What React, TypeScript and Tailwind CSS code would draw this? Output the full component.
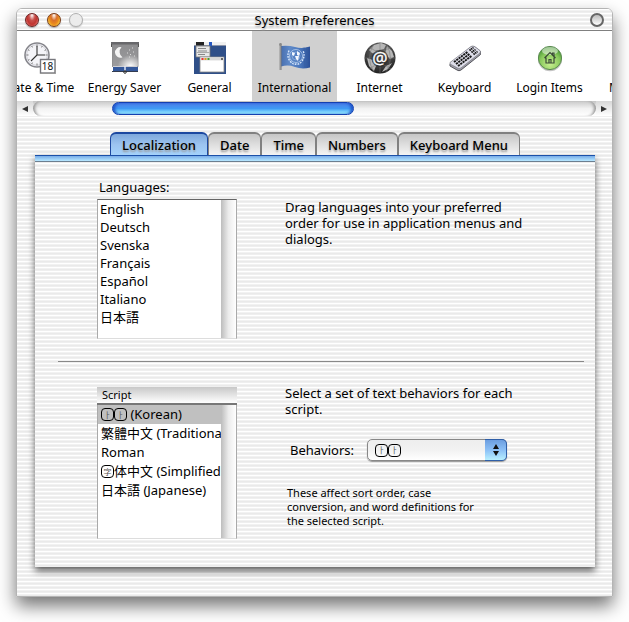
import type { ReactNode } from "react";

const stripes =
  "bg-[repeating-linear-gradient(to_bottom,#ffffff_0px,#ffffff_1px,#f2f2f2_1px,#f2f2f2_2px,#eaeaea_2px,#eaeaea_3px,#efefef_3px,#efefef_4px)]";

function ClockIcon() {
  return (
    <svg width="32" height="32" viewBox="0 0 32 32" aria-hidden="true">
      <circle cx="13" cy="13" r="12" fill="#f4f4f8" stroke="#85858b" strokeWidth="1.6" />
      <circle cx="13" cy="13" r="10.4" fill="none" stroke="#d2d2d8" strokeWidth="1" />
      <path d="M13 2.5v2M13 21.500v2M2.500 13h2M21.500 13h2M7.700 4l.8 1.400M18.300 4l-.8 1.400M4 7.700l1.400.8M22 7.700l-1.400.8M4 18.300l1.400-.8M7.700 22l.8-1.400" stroke="#777" strokeWidth="1" />
      <path d="M13 4v9h8M13 13l-6 6" fill="none" stroke="#333" strokeWidth="1.1" />
      <rect x="16.500" y="17.500" width="14.500" height="13.500" fill="#fff" stroke="#77777d" strokeWidth="1.400" />
      <path d="M16 31.500h15.500V18" fill="none" stroke="#999" strokeWidth="1" />
      <text x="23.500" y="28" fontSize="10" textAnchor="middle" fill="#111" fontFamily="Noto Sans, sans-serif">18</text>
    </svg>
  );
}

function EnergyIcon() {
  return (
    <svg width="32" height="32" viewBox="0 0 32 32" aria-hidden="true">
      <defs>
        <linearGradient id="shade" x1="0" y1="0" x2="0" y2="1">
          <stop offset="0" stopColor="#8c8c8e" />
          <stop offset="1" stopColor="#9c9c9e" />
        </linearGradient>
        <radialGradient id="glow" cx=".7" cy="1" r=".5">
          <stop offset="0" stopColor="#fff" />
          <stop offset="1" stopColor="#fff" stopOpacity="0" />
        </radialGradient>
      </defs>
      <rect x="4" y="22" width="25" height="8" fill="#34589a" />
      <path d="M3 29.500h26" stroke="#333c50" strokeWidth="1.200" />
      <rect x="3.500" y="1" width="25.500" height="23.500" fill="url(#shade)" stroke="#808082" strokeWidth=".8" />
      <rect x="3.500" y="1" width="25.500" height="23.500" fill="url(#glow)" />
      <rect x="2" y="0" width="28" height="2.500" fill="#68686b" />
      <path d="M2.500 2v3M29.500 2v3" stroke="#555" />
      <path d="M12.500 5.200a5.300 5.300 0 1 0 1 10A6.500 6.500 0 0 1 12.500 5.200z" fill="#f4f4f4" />
      <path d="M20 8h1M24 10h1M21 12.500h1M18 11h1M25 14h1M20 15h1M23 6h1" stroke="#ddd" />
      <path d="M4 24.500h24" stroke="#cfcfd4" strokeWidth="1" />
      <path d="M16 24v5" stroke="#dfe6f4" strokeWidth="1.500" />
      <circle cx="16" cy="30" r="1.300" fill="none" stroke="#333" />
    </svg>
  );
}

function GeneralIcon() {
  return (
    <svg width="32" height="32" viewBox="0 0 32 32" aria-hidden="true">
      <rect width="32" height="32" fill="#2f4f88" />
      <rect width="32" height="4" fill="#f0f0f0" />
      <path d="M0 3.500h32" stroke="#8d95a8" />
      <rect x="2" y="0" width="8" height="3.500" fill="#222" />
      <rect x="15" y="0" width="3" height="4" fill="#2456c0" />
      <rect x="2" y="4" width="14" height="11" fill="#e8e8e8" stroke="#777" strokeWidth=".8" />
      <path d="M4 6.500h8M4 9h9M4 12.500h7" stroke="#888" />
      <path d="M2.500 10.500h13" stroke="#aaa" />
      <rect x="6" y="15" width="24" height="15" fill="#fff" stroke="#888" strokeWidth=".8" />
      <rect x="6.400" y="15.400" width="23.200" height="3" fill="#d8d8d8" />
      <path d="M7.500 17h2" stroke="#e33" strokeWidth="2" />
      <path d="M10.500 17h2" stroke="#dc9b20" strokeWidth="2" />
      <path d="M13.500 17h2" stroke="#4a9a30" strokeWidth="2" />
      <rect x="27" y="16" width="2" height="2" fill="#666" />
    </svg>
  );
}

function FlagIcon() {
  return (
    <svg width="32" height="32" viewBox="0 0 32 32" aria-hidden="true">
      <defs>
        <linearGradient id="cloth" x1="0" y1="0" x2="1" y2="0">
          <stop offset="0" stopColor="#496fae" />
          <stop offset=".3" stopColor="#5f8ac9" />
          <stop offset=".65" stopColor="#4b78bd" />
          <stop offset="1" stopColor="#2b5099" />
        </linearGradient>
      </defs>
      <path d="M2 4q7-1 14 1t15-.5v21q-8 2-15-.5T2 24.500z" fill="url(#cloth)" />
      <path d="M25 5.500l1 20M28 5.500l.5 19" stroke="#355d9e" strokeOpacity=".6" />
      <path d="M1.500 3v25" stroke="#777" strokeWidth="2" />
      <path d="M1 3v25" stroke="#ccc" strokeWidth=".7" />
      <circle cx="1.500" cy="2.500" r="1.400" fill="#888" />
      <circle cx="17" cy="14" r="6.500" fill="none" stroke="#c6dbf5" strokeWidth=".7" />
      <circle cx="17" cy="14" r="4" fill="none" stroke="#c6dbf5" strokeWidth=".4" />
      <path d="M13 10l3 1-1 3-2-1zM18 9l3 2-1 3-2-1zM16 14l4 0-1 5-2-2z" fill="#f4f8ff" />
      <path d="M10 8.500q-2.500 6 1 10.500 3 4 6 3Q20 23 23 19q3.500-4.500 1-10.500" fill="none" stroke="#d7e6fb" strokeWidth="1.400" strokeDasharray="1.800 1" />
    </svg>
  );
}

function GlobeIcon() {
  return (
    <svg width="32" height="32" viewBox="0 0 32 32" aria-hidden="true">
      <defs>
        <radialGradient id="orb" cx=".5" cy=".3" r=".7">
          <stop offset="0" stopColor="#777" />
          <stop offset="1" stopColor="#202020" />
        </radialGradient>
      </defs>
      <circle cx="16" cy="16" r="15.500" fill="url(#orb)" />
      <path d="M5 8l5-5 7-2 5 2-2 4-5 1-2 4-5-1zM23 4l5 5 2 6-4 2-5-5zM3 16l6 2 3 6-2 5-5-5zM22 24l6-3-4 6-6 3z" fill="#b6b6b6" />
      <path d="M0.500 16h31M16 .5v31M5 5q11 9 22 0M5 27q11-9 22 0M10 2q-9 14 0 28M22 2q9 14 0 28" fill="none" stroke="#777" strokeWidth=".5" />
      <circle cx="16" cy="16.500" r="8.500" fill="#292929" fillOpacity=".7" />
      <text x="16" y="21.500" textAnchor="middle" fontSize="17" fill="#fff" stroke="#fff" strokeWidth=".3" fontFamily="Noto Sans, sans-serif">@</text>
    </svg>
  );
}

function KeyboardIcon() {
  return (
    <svg width="32" height="32" viewBox="0 0 32 32" aria-hidden="true">
      <path d="M1 22L22 5q2-1 4 0l5.500 4.500q1 1.500 0 3L12 28q-2 1.500-4 0L1 24z" fill="#a2a2ac" stroke="#55555c" strokeWidth="1" />
      <path d="M1 20.500L22 4.500q2-1 3.500 0l5.500 4q1 1 0 2.500L12 26q-2 1-3.500 0L1 22z" fill="#dedeea" stroke="#77777f" strokeWidth=".7" />
      <path d="M5 20l13.500-10M7 22l13.500-10M9 24l13.500-10" stroke="#161616" strokeWidth="1.900" strokeDasharray="2.200 .7" />
      <path d="M20.500 8.500l4-3M22.500 10.500l4-3M24.500 12.500l4-3" stroke="#161616" strokeWidth="1.900" strokeDasharray="1.500 .5" />
    </svg>
  );
}

function LoginIcon() {
  return (
    <svg width="32" height="32" viewBox="0 0 32 32" aria-hidden="true">
      <defs>
        <radialGradient id="lime" cx=".5" cy=".75" r=".75">
          <stop offset="0" stopColor="#c8f090" />
          <stop offset=".6" stopColor="#88c85c" />
          <stop offset="1" stopColor="#3b8d2b" />
        </radialGradient>
      </defs>
      <ellipse cx="16" cy="17.200" rx="12" ry="12" fill="#c4c4c4" />
      <circle cx="16" cy="16" r="11.600" fill="url(#lime)" stroke="#5b8a52" strokeWidth="1" />
      <ellipse cx="16" cy="9" rx="8" ry="4" fill="#fff" fillOpacity=".5" />
      <path d="M10.500 16L16 10.500l5.500 5.500M12 15.500v5.500h8v-5.500M18.500 12.500V11H20v3M15 21v-3.500h2V21" fill="none" stroke="#3a4a36" strokeWidth="1.200" />
    </svg>
  );
}

const panes: { label: string; icon: ReactNode }[] = [
  { label: "Date & Time", icon: <ClockIcon /> },
  { label: "Energy Saver", icon: <EnergyIcon /> },
  { label: "General", icon: <GeneralIcon /> },
  { label: "International", icon: <FlagIcon /> },
  { label: "Internet", icon: <GlobeIcon /> },
  { label: "Keyboard", icon: <KeyboardIcon /> },
  { label: "Login Items", icon: <LoginIcon /> },
  { label: "Monitors", icon: null },
];

const tabs = ["Localization", "Date", "Time", "Numbers", "Keyboard Menu"];
const languages = ["English", "Deutsch", "Svenska", "Français", "Español", "Italiano", "日本語"];

/* Rounded frame used where the font has no glyph for a character. */
function BoxedGlyph({ char }: { char: string }) {
  return (
    <span className="inline-flex h-[13px] w-[13px] shrink-0 items-center justify-center overflow-hidden rounded-[4px] border border-black text-[8px] leading-none text-[#555]">
      {char}
    </span>
  );
}

function KoreanGlyphs() {
  return (
    <span className="inline-flex">
      <BoxedGlyph char="ㅏ" />
      <BoxedGlyph char="ㅏ" />
    </span>
  );
}

const scripts: { key: string; label: ReactNode }[] = [
  { key: "korean", label: <><KoreanGlyphs /><span>&nbsp;(Korean)</span></> },
  { key: "traditional", label: "繁體中文 (Traditional Chinese)" },
  { key: "roman", label: "Roman" },
  { key: "simplified", label: <><BoxedGlyph char="字" /><span>体中文 (Simplified Chinese)</span></> },
  { key: "japanese", label: "日本語 (Japanese)" },
];

function ListTrack() {
  return <div className="w-[15px] shrink-0 bg-linear-to-r from-[#bdbdbd] via-[#ececec] to-white" />;
}

function TitleBar() {
  return (
    <header className={`grid h-[22px] grid-cols-[1fr_auto_1fr] items-center border-b border-[#808080] px-2 ${stripes}`}>
      <div className="flex gap-2">
        <button aria-label="Close" className="h-[14px] w-[14px] rounded-full border border-[#6a2020] bg-[radial-gradient(ellipse_at_50%_10%,#ffffff_0%,#c8504c_35%,#c03430_60%,#ffa098_100%)] shadow-[0_1px_1px_#aaaaaa]" />
        <button aria-label="Minimize" className="h-[14px] w-[14px] rounded-full border border-[#7a3a16] bg-[radial-gradient(ellipse_at_50%_10%,#ffffff_0%,#d8702c_35%,#ec8c1c_60%,#fff85c_95%)] shadow-[0_1px_1px_#aaaaaa]" />
        <button aria-label="Zoom" disabled className="h-[14px] w-[14px] rounded-full border border-[#b0b0b0] bg-[#ececec] shadow-[0_1px_1px_#cccccc]" />
      </div>
      <h1 className="text-[13px] leading-5 [text-shadow:0_2px_2px_#aaaaaa]">System Preferences</h1>
      <button aria-label="Toggle toolbar" className="h-[14px] w-[14px] justify-self-end rounded-full border-2 border-[#666] bg-linear-to-b from-[#bbbbbb] to-white" />
    </header>
  );
}

function Toolbar() {
  return (
    <nav aria-label="Preference panes" className="overflow-hidden bg-white">
      <div className="-ml-5 flex">
        {panes.map((pane) => (
          <button
            key={pane.label}
            className={`flex h-[70px] w-[85px] shrink-0 flex-col items-center pt-[11px] text-[12px] leading-4 whitespace-nowrap ${
              pane.label === "International" ? "bg-[#d0d0d0]" : ""
            }`}
          >
            <span className="h-[38px]">{pane.icon}</span>
            {pane.label}
          </button>
        ))}
      </div>
    </nav>
  );
}

function PaneScroller() {
  return (
    <div className="flex h-[15px] items-center bg-linear-to-b from-[#c4c4c4] via-[#f4f4f4] to-white">
      <button aria-label="Scroll left" className="flex h-full w-4 items-center justify-center bg-linear-to-b from-[#d8d8d8] to-white">
        <svg width="6" height="6" viewBox="0 0 6 6"><path d="M6 0v6L0 3z" fill="#333" /></svg>
      </button>
      <div className="flex h-full grow rounded-full bg-linear-to-b from-[#c8c8c8] via-[#f2f2f2] to-white shadow-[inset_4px_0_3px_-2px_#999999,inset_-4px_0_3px_-2px_#999999]">
        <div className="w-[14%]" />
        <div className="my-px w-[43%] rounded-full border border-[#1440b0] bg-linear-to-b from-[#4a7ce8] via-[#3f9af4] to-[#a0f4ff] shadow-[inset_3px_0_3px_-1px_#1d50c8,inset_-3px_0_3px_-1px_#1d50c8]" />
      </div>
      <button aria-label="Scroll right" className="flex h-full w-4 items-center justify-center bg-linear-to-b from-[#d8d8d8] to-white">
        <svg width="6" height="6" viewBox="0 0 6 6"><path d="M0 0v6l6-3z" fill="#333" /></svg>
      </button>
    </div>
  );
}

function TabBar() {
  return (
    <div role="tablist" className="flex justify-center">
      {tabs.map((tab, i) => (
        <button
          key={tab}
          role="tab"
          aria-selected={i === 0}
          className={`h-[23px] rounded-t-[6px] border-x border-t-2 px-[11px] text-[13px] leading-5 font-medium [text-shadow:0_2px_2px_#999999] ${
            i === 0
              ? "border-[#1c48a0] bg-linear-to-b from-[#7ea8dc] via-[#9cc4f0] to-[#a4d2fb]"
              : "border-[#808080] bg-linear-to-b from-[#c6c6c6] via-[#dedede] to-[#f4f4f4]"
          }`}
        >
          {tab}
        </button>
      ))}
    </div>
  );
}

function Languages() {
  return (
    <section className="grid grid-cols-[140px_1fr] gap-x-12 pr-[60px] pl-[62px]">
      <div>
        <h2 id="languages" className="pl-[2px] text-[13px] leading-6">Languages:</h2>
        <div className="flex h-[140px] border border-t-[#666] border-r-[#aaa] border-b-[#ddd] border-l-[#aaa] bg-white">
          <ul role="listbox" aria-labelledby="languages" className="min-w-0 grow">
            {languages.map((name) => (
              <li key={name} role="option" aria-selected={false} className="h-[18px] pl-[2px] text-[13px] leading-[18px]">
                {name}
              </li>
            ))}
          </ul>
          <ListTrack />
        </div>
      </div>
      <p className="max-w-[252px] pt-6 text-[13px] leading-4">
        Drag languages into your preferred order for use in application menus and dialogs.
      </p>
    </section>
  );
}

function Scripts() {
  return (
    <section className="grid grid-cols-[140px_1fr] gap-x-12 pr-[60px] pl-[62px]">
      <div className="flex h-[154px] flex-col pt-[2px]">
        <table className="w-full table-fixed">
          <thead>
            <tr>
              <th className="h-[17px] border-b-2 border-[#777] bg-linear-to-b from-[#c8c8c8] via-[#e4e4e4] to-white p-0 pl-[5px] text-left text-[11px] leading-[14px] font-normal">Script</th>
            </tr>
          </thead>
        </table>
        <div className="flex min-h-0 grow border border-t-0 border-r-[#aaa] border-b-[#ddd] border-l-[#aaa] bg-white">
          <table aria-label="Script" className="w-0 grow table-fixed self-start">
            <tbody>
              {scripts.map(({ key, label }) => (
                <tr key={key} className={key === "korean" ? "bg-[#c0c0c0]" : ""}>
                  <td className="overflow-hidden p-0 pl-[3px] text-[13px]">
                    <div className="flex h-[19px] items-center leading-[19px] whitespace-nowrap">{label}</div>
                  </td>
                </tr>
              ))}
            </tbody>
          </table>
          <ListTrack />
        </div>
      </div>
      <div>
        <p className="max-w-[245px] text-[13px] leading-4">Select a set of text behaviors for each script.</p>
        <div className="mt-[22px] flex items-center gap-[13px] pl-[5px]">
          <label htmlFor="behaviors" className="text-[13px] leading-4">Behaviors:</label>
          <div className="relative h-[22px] w-[140px]">
            <select
              id="behaviors"
              className="block h-full w-full appearance-none rounded-[5px] border border-[#888] bg-linear-to-b from-[#eeeeee] via-[#f2f2f2] to-white pl-2 text-[13px] text-transparent shadow-[0_1px_1px_#999999]"
            >
              <option>ㅏㅏ</option>
            </select>
            <span className="pointer-events-none absolute inset-y-0 left-2 flex items-center"><KoreanGlyphs /></span>
            <span className="pointer-events-none absolute inset-y-0 right-0 flex w-[22px] items-center justify-center rounded-r-[5px] border-t border-r border-b border-[#2f5fa8] bg-linear-to-b from-[#6c9ee0] via-[#8cc0f6] to-[#b8f0ff]">
              <svg width="6" height="12" viewBox="0 0 6 12"><path d="M0 5l3-5 3 5zM0 7h6l-3 5z" fill="#111" /></svg>
            </span>
          </div>
        </div>
        <p className="mt-[25px] max-w-[205px] pl-[2px] text-[11px] leading-[14px]">
          These affect sort order, case conversion, and word definitions for the selected script.
        </p>
      </div>
    </section>
  );
}

export default function App() {
  return (
    <div className="min-h-screen overflow-hidden bg-white px-4 pt-2 pb-6 font-['Noto_Sans','Noto_Sans_CJK_JP',sans-serif] text-black">
      <main className={`overflow-hidden rounded-t-[6px] border border-[#b4b4b4] shadow-[0_9px_18px_rgba(0,0,0,0.55)] ${stripes}`}>
        <TitleBar />
        <Toolbar />
        <PaneScroller />
        <div className="pt-4 pr-[17px] pb-[29px] pl-[18px]">
          <TabBar />
          <div className={`shadow-[0_4px_7px_rgba(0,0,0,0.6)] ${stripes}`}>
            <div className="h-[7px] border-t border-b border-t-[#1c50a8] border-b-[#6d7f90] bg-linear-to-b from-[#78ace8] to-[#b8e8ff]" />
            <div className="pt-[13px] pb-[28px]">
              <Languages />
              <hr className="mt-[22px] mr-[11px] mb-[23px] ml-[23px] border-[#888]" />
              <Scripts />
            </div>
          </div>
        </div>
      </main>
    </div>
  );
}
